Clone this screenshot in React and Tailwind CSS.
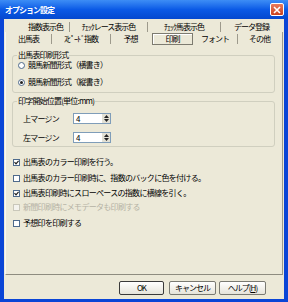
import React from "react";

const F = { fontFamily: '"Noto Sans CJK JP", "Noto Sans", sans-serif' };

function Sep() {
  return <div className="w-[1px] h-[10px] bg-[#9D9A8C] self-center" />;
}

function Tab({ w, children }) {
  return (
    <div className={`${w} h-full flex items-center justify-center`}>
      <span className="text-[8px] leading-[10px] tracking-[-1px] text-black whitespace-nowrap">{children}</span>
    </div>
  );
}

function Radio({ checked, label }) {
  return (
    <div className="flex items-center h-[10px]">
      <div className="w-[7px] h-[7px] rounded-full border border-[#4E6A8C] bg-white flex items-center justify-center ml-[5px]">
        {checked && <div className="w-[3px] h-[3px] rounded-full bg-[#222]" />}
      </div>
      <span className="ml-[3px] text-[8px] leading-[10px] tracking-[-0.8px] text-black whitespace-nowrap">{label}</span>
    </div>
  );
}

function Check({ checked, disabled, label, mt }) {
  return (
    <div className={`flex items-center h-[10px] ${mt}`}>
      <div
        className={`ml-[7px] w-[7px] h-[7px] border flex items-center justify-center ${
          disabled ? "border-[#C9C7BA] bg-[#F4F3EE]" : "border-[#4E6A8C] bg-white"
        }`}
      >
        {checked && (
          <svg width="5" height="5" viewBox="0 0 5 5">
            <path d="M0.5 2.2 L2 3.8 L4.6 0.8" stroke="#1b1b1b" strokeWidth="1.2" fill="none" />
          </svg>
        )}
      </div>
      <span
        className={`ml-[3px] text-[8px] leading-[10px] tracking-[-0.7px] whitespace-nowrap ${
          disabled ? "text-[#B5B2A4]" : "text-black"
        }`}
      >
        {label}
      </span>
    </div>
  );
}

function Spin({ value }) {
  return (
    <div className="w-[38px] h-[11px] bg-white border border-[#7F9DB9] flex items-stretch">
      <span className="flex-1 pl-[2px] text-[8px] leading-[9px] text-black">{value}</span>
      <div className="w-[8px] flex flex-col">
        <div className="flex-1 bg-[#E3E1D5] flex items-center justify-center">
          <svg width="5" height="3" viewBox="0 0 5 3"><path d="M0 3 L2.5 0 L5 3 Z" fill="#222" /></svg>
        </div>
        <div className="flex-1 bg-[#E3E1D5] flex items-center justify-center">
          <svg width="5" height="3" viewBox="0 0 5 3"><path d="M0 0 L2.5 3 L5 0 Z" fill="#222" /></svg>
        </div>
      </div>
    </div>
  );
}

function Btn({ w, def, children, ml }) {
  return (
    <div
      className={`${w} ${ml} h-[14px] rounded-[2px] border ${
        def ? "border-[#3A3A3A]" : "border-[#7A7A72]"
      } bg-gradient-to-b from-[#FFFFFF] to-[#E6E4DA] flex items-center justify-center`}
    >
      <span className="text-[8px] leading-[10px] tracking-[-1px] text-black whitespace-nowrap">{children}</span>
    </div>
  );
}

export default function App() {
  return (
    <div style={F} className="w-[288px] h-[302px] flex flex-col bg-[#0A45D6] overflow-hidden">
      {/* title bar */}
      <div className="h-[19px] flex items-center bg-gradient-to-b from-[#3D8DF5] via-[#0B5AE6] to-[#0448CF] px-[4px]">
        <span className="text-[8px] leading-[10px] tracking-[-1px] font-bold text-white ml-[1px]">オプション設定</span>
        <div className="ml-auto w-[14px] h-[13px] rounded-[2px] border border-white bg-gradient-to-b from-[#E97A5C] to-[#C8401C] flex items-center justify-center">
          <svg width="8" height="8" viewBox="0 0 8 8">
            <path d="M1 1 L7 7 M7 1 L1 7" stroke="white" strokeWidth="1.6" />
          </svg>
        </div>
      </div>

      {/* body */}
      <div className="flex-1 mx-[4px] mb-[3px] bg-[#ECE9D8] flex flex-col">
        {/* back tab row */}
        <div className="mt-[2px] h-[11px] flex pl-[18px]">
          <Tab w="w-[47px]">指数表示色</Tab>
          <Sep />
          <Tab w="w-[77px]">ﾁｪｯｸレース表示色</Tab>
          <Sep />
          <Tab w="w-[72px]">ﾁｪｯｸ馬表示色</Tab>
          <Sep />
          <Tab w="w-[61px]">データ登録</Tab>
        </div>

        {/* panel */}
        <div className="ml-[1px] w-[278px] h-[243px] border-l border-r border-b border-l-[#F8F7F2] border-r-[#9C9A8E] border-b-[#8E8C80] flex flex-col">
          {/* front tab row */}
          <div className="mt-[1px] h-[12px] flex">
            <Tab w="w-[45px]">出馬表</Tab>
            <Sep />
            <Tab w="w-[58px]">ｽﾋﾟｰﾄﾞ指数</Tab>
            <Sep />
            <Tab w="w-[39px]">予想</Tab>
            <div className="ml-[2px] w-[41px] h-full border border-[#7D7B70] shadow-[inset_1px_1px_0_#ffffff] flex items-center justify-center">
              <span className="text-[8px] leading-[10px] tracking-[-1px] text-black">印刷</span>
            </div>
            <Tab w="w-[44px]">フォント</Tab>
            <Sep />
            <Tab w="w-[43px]">その他</Tab>
          </div>

          {/* group 1 */}
          <fieldset className="mt-[5px] ml-[6px] w-[263px] h-[43px] border border-[#D0CFBF] rounded-[3px] flex flex-col">
            <legend className="ml-[4px] px-[1px] text-[8px] leading-[10px] tracking-[-0.8px] text-black">出馬表印刷形式</legend>
            <Radio label="競馬新聞形式（横書き）" />
            <div className="mt-[7px]">
              <Radio checked label="競馬新聞形式（縦書き）" />
            </div>
          </fieldset>

          {/* group 2 */}
          <fieldset className="mt-[3px] ml-[6px] w-[263px] h-[51px] border border-[#D0CFBF] rounded-[3px] flex flex-col">
            <legend className="ml-[4px] px-[1px] text-[8px] leading-[10px] tracking-[-0.8px] text-black">印字開始位置(単位:mm)</legend>
            <div className="mt-[7px] h-[11px] flex items-center pl-[10px]">
              <span className="w-[50px] text-[8px] leading-[10px] tracking-[-0.8px] text-black">上マージン</span>
              <Spin value="4" />
            </div>
            <div className="mt-[8px] h-[11px] flex items-center pl-[10px]">
              <span className="w-[50px] text-[8px] leading-[10px] tracking-[-0.8px] text-black">左マージン</span>
              <Spin value="4" />
            </div>
          </fieldset>

          <Check mt="mt-[10px]" checked label="出馬表のカラー印刷を行う。" />
          <Check mt="mt-[6px]" label="出馬表のカラー印刷時に、指数のバックに色を付ける。" />
          <Check mt="mt-[5px]" checked label="出馬表印刷時にスローペースの指数に横線を引く。" />
          <Check mt="mt-[4px]" disabled label="新聞印刷時にメモデータも印刷する" />
          <Check mt="mt-[6px]" label="予想印を印刷する" />
        </div>

        {/* buttons */}
        <div className="mt-[6px] flex pl-[115px]">
          <Btn w="w-[45px]" def>OK</Btn>
          <Btn w="w-[47px]" ml="ml-[5px]">キャンセル</Btn>
          <Btn w="w-[47px]" ml="ml-[3px]">
            ヘルプ(<span className="underline">H</span>)
          </Btn>
        </div>
      </div>
    </div>
  );
}
